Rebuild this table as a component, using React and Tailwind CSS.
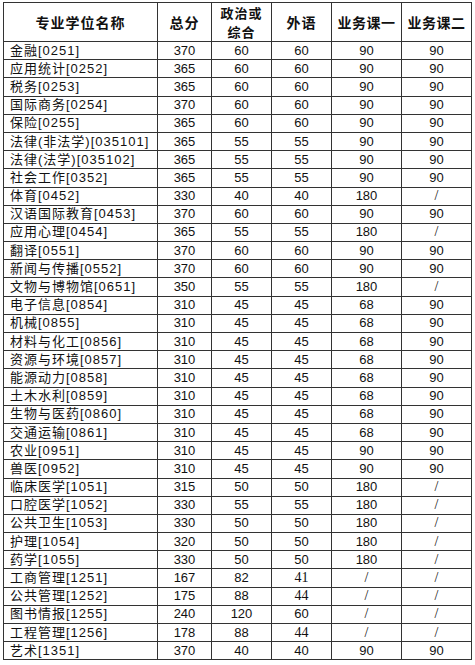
import React from 'react';

const rows = [
  ['金融[0251]', '370', '60', '60', '90', '90'],
  ['应用统计[0252]', '365', '60', '60', '90', '90'],
  ['税务[0253]', '365', '60', '60', '90', '90'],
  ['国际商务[0254]', '370', '60', '60', '90', '90'],
  ['保险[0255]', '365', '60', '60', '90', '90'],
  ['法律(非法学)[035101]', '365', '55', '55', '90', '90'],
  ['法律(法学)[035102]', '365', '55', '55', '90', '90'],
  ['社会工作[0352]', '365', '55', '55', '90', '90'],
  ['体育[0452]', '330', '40', '40', '180', '/'],
  ['汉语国际教育[0453]', '370', '60', '60', '90', '90'],
  ['应用心理[0454]', '365', '55', '55', '180', '/'],
  ['翻译[0551]', '370', '60', '60', '90', '90'],
  ['新闻与传播[0552]', '370', '60', '60', '90', '90'],
  ['文物与博物馆[0651]', '350', '55', '55', '180', '/'],
  ['电子信息[0854]', '310', '45', '45', '68', '90'],
  ['机械[0855]', '310', '45', '45', '68', '90'],
  ['材料与化工[0856]', '310', '45', '45', '68', '90'],
  ['资源与环境[0857]', '310', '45', '45', '68', '90'],
  ['能源动力[0858]', '310', '45', '45', '68', '90'],
  ['土木水利[0859]', '310', '45', '45', '68', '90'],
  ['生物与医药[0860]', '310', '45', '45', '68', '90'],
  ['交通运输[0861]', '310', '45', '45', '68', '90'],
  ['农业[0951]', '310', '45', '45', '90', '90'],
  ['兽医[0952]', '310', '45', '45', '90', '90'],
  ['临床医学[1051]', '315', '50', '50', '180', '/'],
  ['口腔医学[1052]', '330', '55', '55', '180', '/'],
  ['公共卫生[1053]', '330', '50', '50', '180', '/'],
  ['护理[1054]', '320', '50', '50', '180', '/'],
  ['药学[1055]', '330', '50', '50', '180', '/'],
  ['工商管理[1251]', '167', '82', '41', '/', '/'],
  ['公共管理[1252]', '175', '88', '44', '/', '/'],
  ['图书情报[1255]', '240', '120', '60', '/', '/'],
  ['工程管理[1256]', '178', '88', '44', '/', '/'],
  ['艺术[1351]', '370', '40', '40', '90', '90'],
];

// a few cells in the source are set in a serif face
const serif = (v) => v === '/' || v === '41' || v === '44';

export default function App() {
  return (
    <div className="bg-white w-[475px] h-[665px] pt-[2px] pl-[3px] font-['Liberation_Sans','Noto_Sans_CJK_SC',sans-serif] text-[#111]">
      <table className="table-fixed border-collapse w-[469px]">
        <colgroup>
          <col className="w-[154px]" />
          <col className="w-[54px]" />
          <col className="w-[60px]" />
          <col className="w-[60px]" />
          <col className="w-[70px]" />
          <col className="w-[70px]" />
        </colgroup>
        <thead>
          <tr className="h-[39px] text-[14px] leading-[20px] tracking-[1px] font-['Noto_Sans_CJK_SC',sans-serif]">
            <th className="border border-[#333] p-0 font-bold">专业学位名称</th>
            <th className="border border-[#333] p-0 font-bold">总分</th>
            <th className="border border-[#333] p-0 font-bold text-[13px] leading-[19px]">
              <div>政治或</div>
              <div>综合</div>
            </th>
            <th className="border border-[#333] p-0 font-bold">外语</th>
            <th className="border border-[#333] p-0 font-bold tracking-[0.5px]">业务课一</th>
            <th className="border border-[#333] p-0 font-bold tracking-[0.5px]">业务课二</th>
          </tr>
        </thead>
        <tbody>
          {rows.map((r) => (
            <tr key={r[0]} className="h-[18.2px] text-[13px] leading-[16px]">
              <td className="border border-[#333] p-0 pl-[6px] whitespace-nowrap tracking-[1px]">{r[0]}</td>
              {r.slice(1).map((v, i) => (
                <td
                  key={i}
                  className={`border border-[#333] p-0 text-center ${serif(v) ? "font-['Liberation_Serif',serif] text-[14px]" : ''}`}
                >
                  {v}
                </td>
              ))}
            </tr>
          ))}
        </tbody>
      </table>
    </div>
  );
}
